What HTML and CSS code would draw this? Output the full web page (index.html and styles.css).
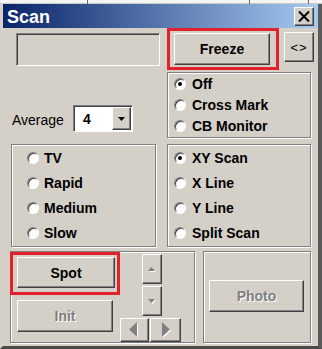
FILE: index.html
```html
<!DOCTYPE html>
<html>
<head>
<meta charset="utf-8">
<link rel="stylesheet" href="styles.css">
</head>
<body>
<div class="strip"><span class="cell c1"></span><span class="cell c2"></span><span class="cell c3"></span></div>
<div class="window">
  <div class="titlebar">
    <span class="title">Scan</span>
    <div class="btn close"><svg width="12" height="11" viewBox="0 0 12 11"><path d="M1 0.5 L11 10.5 M11 0.5 L1 10.5" stroke="#000" stroke-width="2"/></svg></div>
  </div>
  <div class="content">
    <div class="row r1">
      <div class="field"></div>
      <div class="mark freeze-mark"><div class="btn freeze">Freeze</div></div>
      <div class="btn swap">&lt;&gt;</div>
    </div>
    <div class="row r2">
      <div class="avg">
        <span class="avg-label">Average</span>
        <div class="combo">
          <span class="combo-val">4</span>
          <div class="btn drop"><svg width="7" height="4" viewBox="0 0 7 4"><path d="M0 0 H7 L3.5 4 Z" fill="#000"/></svg></div>
        </div>
      </div>
      <div class="group g-mode">
        <div class="radio on"><i></i>Off</div>
        <div class="radio"><i></i>Cross Mark</div>
        <div class="radio"><i></i>CB Monitor</div>
      </div>
    </div>
    <div class="row r3">
      <div class="group g-speed">
        <div class="radio"><i></i>TV</div>
        <div class="radio"><i></i>Rapid</div>
        <div class="radio"><i></i>Medium</div>
        <div class="radio"><i></i>Slow</div>
      </div>
      <div class="group g-scan">
        <div class="radio on"><i></i>XY Scan</div>
        <div class="radio"><i></i>X Line</div>
        <div class="radio"><i></i>Y Line</div>
        <div class="radio"><i></i>Split Scan</div>
      </div>
    </div>
    <div class="row r4">
      <div class="group g-spot">
        <div class="col-a">
          <div class="mark spot-mark"><div class="btn spot">Spot</div></div>
          <div class="btn init disabled">Init</div>
        </div>
        <div class="cluster">
          <div class="btn arrow up"><svg width="8" height="5" viewBox="0 0 8 5"><path d="M1 5 H8 L4.5 1 Z" fill="#fff"/><path d="M0 4 H7 L3.5 0 Z" fill="#808080"/></svg></div>
          <div class="btn arrow down"><svg width="8" height="5" viewBox="0 0 8 5"><path d="M1 1 H8 L4.5 5 Z" fill="#fff"/><path d="M0 0 H7 L3.5 4 Z" fill="#808080"/></svg></div>
          <div class="lr">
            <div class="btn arrow left"><svg width="10" height="16" viewBox="0 0 10 16"><path d="M10 1 V16 L2 8.5 Z" fill="#fff"/><path d="M9 0 V15 L1 7.5 Z" fill="#808080"/></svg></div>
            <div class="btn arrow right"><svg width="10" height="16" viewBox="0 0 10 16"><path d="M1 1 V16 L9 8.5 Z" fill="#fff"/><path d="M0 0 V15 L8 7.5 Z" fill="#808080"/></svg></div>
          </div>
        </div>
      </div>
      <div class="group g-photo">
        <div class="btn photo disabled">Photo</div>
      </div>
    </div>
  </div>
</div>
</body>
</html>
```
FILE: styles.css
```css
* { box-sizing: border-box; }
body {
  margin: 0;
  width: 322px;
  height: 349px;
  overflow: hidden;
  background: #d4d0c8;
  font-family: "Liberation Sans", Arial, sans-serif;
  font-size: 14px;
  color: #000;
}
.strip {
  height: 4px;
  background: #f4f4f2;
  display: flex;
  border-bottom: 1px solid #c8c8c8;
}
.cell { height: 4px; border-right: 1px solid #6a6a6a; }
.c1 { width: 88px; }
.c2 { width: 162px; }
.c3 { width: 59px; }
.window {
  width: 322px;
  height: 345px;
  border-left: 3px solid #d4d0c8;
  border-right: 4px solid #5a5a5a;
  border-bottom: 3px solid #4a4a4a;
  display: flex;
  flex-direction: column;
}
.titlebar {
  height: 24px;
  flex: none;
  display: flex;
  align-items: center;
  justify-content: space-between;
  padding: 0 4px 0 4px;
  background: linear-gradient(to right, #0a246a, #a6caf0);
}
.title {
  color: #fff;
  font-weight: bold;
  font-size: 18px;
  padding-top: 2px;
}
.btn {
  background: #d4d0c8;
  border: 1px solid;
  border-color: #fff #404040 #404040 #fff;
  box-shadow: inset -1px -1px #808080;
  display: flex;
  align-items: center;
  justify-content: center;
  font-weight: bold;
  flex: none;
}
.close { width: 20px; height: 19px; margin-top: 1px; }
.content { flex: 1; display: flex; flex-direction: column; }
.row { display: flex; flex: none; }
.r1 { height: 44px; }
.field {
  margin: 5px 0 0 13px;
  width: 144px;
  height: 33px;
  border: 1px solid;
  border-color: #808080 #fff #fff #808080;
  box-shadow: inset 1px 1px #404040;
}
.mark { border: 3px solid #e3212b; flex: none; }
.freeze-mark {
  margin-left: 7px;
  height: 42px;
  padding: 2px 6px 2px 4px;
}
.freeze { width: 96px; height: 32px; }
.swap {
  margin: 4px 0 0 5px;
  width: 30px;
  height: 30px;
  font-weight: normal;
  font-size: 13px;
  letter-spacing: 1px;
}
.r2 { height: 66px; }
.avg {
  width: 164px;
  display: flex;
  align-items: center;
  align-self: flex-end;
  padding-left: 9px;
  margin-bottom: 6px;
}
.avg-label { font-size: 14px; width: 53px; padding-top: 3px; }
.combo {
  margin-left: 8px;
  width: 60px;
  height: 27px;
  background: #fff;
  border: 1px solid;
  border-color: #808080 #fff #fff #808080;
  box-shadow: inset 1px 1px #404040;
  display: flex;
  align-items: center;
  justify-content: space-between;
  padding: 1px 1px 1px 9px;
}
.combo-val { font-size: 14px; font-weight: bold; }
.drop { width: 19px; height: 23px; }
.group {
  border: 1px solid #808080;
  box-shadow: inset 1px 1px #fff, 1px 1px 0 #fff;
  flex: none;
}
.radio {
  display: flex;
  align-items: center;
  gap: 6px;
  font-weight: bold;
  white-space: nowrap;
}
.radio i {
  position: relative;
  flex: none;
  width: 12px;
  height: 12px;
  border-radius: 50%;
  background: #fff;
  border: 1px solid;
  border-color: #808080 #fff #fff #808080;
  box-shadow: inset 1px 1px #404040;
}
.radio.on i::after {
  content: "";
  position: absolute;
  left: 3px;
  top: 3px;
  width: 4px;
  height: 4px;
  border-radius: 50%;
  background: #000;
}
.g-mode {
  width: 144px;
  height: 66px;
  padding: 0 0 0 6px;
}
.g-mode .radio { height: 21px; }
.r3 { margin-top: 6px; height: 103px; }
.g-speed {
  margin-left: 8px;
  width: 145px;
  height: 103px;
  padding: 1px 0 0 15px;
  display: flex;
  flex-direction: column;
  gap: 1px;
}
.g-speed .radio { gap: 5px; }
.g-scan {
  margin-left: 11px;
  width: 144px;
  height: 103px;
  padding: 1px 0 0 6px;
  display: flex;
  flex-direction: column;
  gap: 1px;
}
.g-speed .radio, .g-scan .radio { height: 24px; }
.r4 { margin-top: 4px; height: 92px; }
.g-spot {
  margin-left: 7px;
  width: 185px;
  height: 92px;
  display: flex;
}
.col-a { margin-left: -1px; width: 110px; flex: none; }
.spot-mark { padding: 2px 2px 4px 4px; width: 110px; height: 43px; }
.spot { width: 98px; height: 31px; }
.init { margin: 5px 0 0 7px; width: 96px; height: 32px; }
.disabled { color: #808080; text-shadow: 1px 1px #fff; }
.cluster { margin-top: 2px; display: flex; flex-direction: column; }
.up, .down { margin-left: 22px; width: 20px; height: 30px; }
.down { margin-top: 2px; }
.lr { display: flex; margin-top: 2px; }
.left { width: 29px; height: 24px; padding-right: 3px; }
.right { margin-left: 1px; width: 31px; height: 24px; padding-left: 3px; }
.g-photo {
  margin-left: 8px;
  width: 108px;
  height: 92px;
  padding: 28px 0 0 5px;
}
.photo { width: 95px; height: 32px; }
```
